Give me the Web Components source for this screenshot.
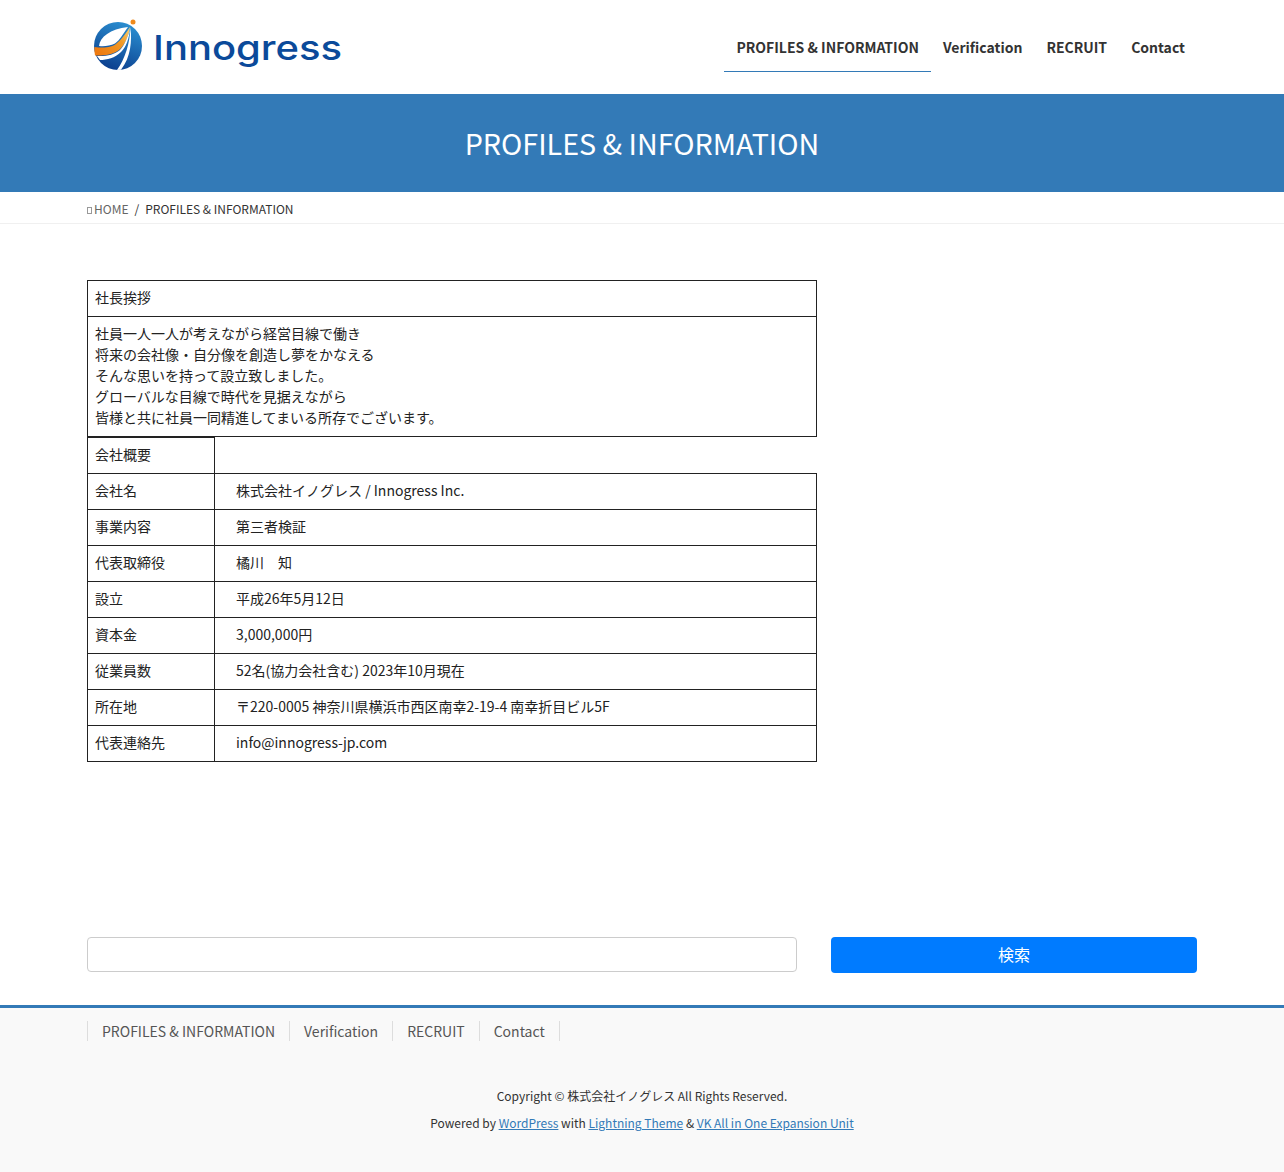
<!DOCTYPE html>
<html lang="ja">
<head>
<meta charset="utf-8">
<title>PROFILES &amp; INFORMATION</title>
<style>
  html, body { margin: 0; padding: 0; background: #fff; }
  body { font-family: "Noto Sans CJK JP", "Noto Sans", sans-serif; font-size: 14px; color: #333; }
  site-shell { min-height: 1172px; }
</style>
</head>
<body>
<site-shell>
  <site-header></site-header>
  <page-title>PROFILES &amp; INFORMATION</page-title>
  <bread-crumb current="PROFILES &amp; INFORMATION"></bread-crumb>
  <profile-tables></profile-tables>
  <search-form></search-form>
  <site-footer></site-footer>
</site-shell>

<script>
class SiteShell extends HTMLElement {
    constructor() {
        super();
        this.attachShadow({ mode: 'open' });
    }
    connectedCallback() {
        this.shadowRoot.innerHTML = `
            <style>
                :host { display: flex; flex-direction: column; }
            </style>
            <slot></slot>
        `;
    }
}

class SiteHeader extends HTMLElement {
    constructor() {
        super();
        this.attachShadow({ mode: 'open' });
    }
    connectedCallback() {
        this.shadowRoot.innerHTML = `
            <style>
                :host { display: block; height: 94px; background: #fff; }
                .wrap {
                    width: 1110px;
                    height: 94px;
                    margin: 0 auto;
                    display: flex;
                    justify-content: space-between;
                    align-items: flex-start;
                }
                .logo { display: flex; align-items: center; height: 94px; padding-left: 6px; }
                .logo svg { display: block; }
                .word {
                    font-family: "Inter", sans-serif;
                    font-weight: 500;
                    font-size: 34.5px;
                    fill: #0b4a9a;
                }
                nav { display: flex; padding: 23px 0 0 0; }
                a {
                    display: block;
                    height: 48px;
                    padding: 0 12px;
                    box-sizing: border-box;
                    font-size: 14px;
                    font-weight: 700;
                    line-height: 49px;
                    color: #333;
                    text-decoration: none;
                }
                a.on { border-bottom: 1px solid #337ab7; height: 49px; }
            </style>
            <div class="wrap">
                <div class="logo">
                    <svg width="250" height="56" viewBox="0 0 250 56">
                        <defs>
                            <linearGradient id="ring" x1="0.7" y1="0" x2="0.3" y2="1">
                                <stop offset="0" stop-color="#2b90d2"/>
                                <stop offset="1" stop-color="#0a3c8c"/>
                            </linearGradient>
                            <linearGradient id="flame" x1="0" y1="0.8" x2="1" y2="0">
                                <stop offset="0" stop-color="#ee7a10"/>
                                <stop offset="0.6" stop-color="#f19a26"/>
                                <stop offset="1" stop-color="#f9d67a"/>
                            </linearGradient>
                        </defs>
                        <circle cx="25" cy="27" r="24" fill="url(#ring)"/>
                        <path d="M6 27 C7 18 17 10 35 8 C30 15 27 21 22 24.5 C17 27 11 27.5 6 27Z" fill="#fff"/>
                        <path d="M1.5 28 C10 29 19 29 24 24 C29 20 33 14 37 8 C36 16 32 26 26 31 C19 36 9 37 2 36.5 C1.5 33 1.3 31 1.5 28Z" fill="url(#flame)"/>
                        <path d="M4 37 C13 37.5 21 36 27 31 C31 27 35 18 37 10 C36 20 33 28 28 33 C22 39 14 41 7 41Z" fill="#fff"/>
                        <path d="M37.5 8 C39 22 38 38 28 50.8 L24 51 C32 40 37 24 37.5 8Z" fill="#fff"/>
                        <circle cx="40" cy="3" r="2.5" fill="#ef8a1c"/>
                        <text class="word" x="60" y="41" textLength="189" lengthAdjust="spacingAndGlyphs">Innogress</text>
                    </svg>
                </div>
                <nav>
                    <a class="on" href="#">PROFILES &amp; INFORMATION</a>
                    <a href="#">Verification</a>
                    <a href="#">RECRUIT</a>
                    <a href="#">Contact</a>
                </nav>
            </div>
        `;
    }
}

class PageTitle extends HTMLElement {
    constructor() {
        super();
        this.attachShadow({ mode: 'open' });
    }
    connectedCallback() {
        this.shadowRoot.innerHTML = `
            <style>
                :host {
                    display: block;
                    height: 98px;
                    background: #337ab7;
                    color: #fff;
                    font-size: 28.7px;
                    line-height: 98px;
                    text-align: center;
                }
            </style>
            <slot></slot>
        `;
    }
}

class BreadCrumb extends HTMLElement {
    constructor() {
        super();
        this.attachShadow({ mode: 'open' });
    }
    connectedCallback() {
        this.shadowRoot.innerHTML = `
            <style>
                :host {
                    display: block;
                    height: 32px;
                    box-sizing: border-box;
                    border-bottom: 1px solid #f0f0f0;
                }
                .wrap {
                    width: 1110px;
                    margin: 0 auto;
                    display: flex;
                    align-items: center;
                    height: 32px;
                    font-size: 12px;
                    color: #333;
                }
                .tofu {
                    width: 3px;
                    height: 5px;
                    border: 1px solid #999;
                    margin: 4px 2px 0 0;
                }
                .home { color: #666; }
                .sep { padding: 0 6px; }
            </style>
            <div class="wrap">
                <span class="tofu"></span>
                <span class="home">HOME</span>
                <span class="sep">/</span>
                <span>${this.getAttribute('current').replace('&', '&amp;')}</span>
            </div>
        `;
    }
}

class ProfileTables extends HTMLElement {
    constructor() {
        super();
        this.attachShadow({ mode: 'open' });
    }
    connectedCallback() {
        const rows = [
            ['会社名', '　株式会社イノグレス / Innogress Inc.'],
            ['事業内容', '　第三者検証'],
            ['代表取締役', '　橘川　知'],
            ['設立', '　平成26年5月12日'],
            ['資本金', '　3,000,000円'],
            ['従業員数', '　52名(協力会社含む) 2023年10月現在'],
            ['所在地', '　〒220-0005 神奈川県横浜市西区南幸2-19-4 南幸折目ビル5F'],
            ['代表連絡先', '　info@innogress-jp.com']
        ];
        this.shadowRoot.innerHTML = `
            <style>
                :host {
                    display: block;
                    width: 1110px;
                    margin: 56px auto 0;
                    height: 657px;
                    color: #222;
                    font-size: 14px;
                    line-height: 21px;
                }
                table { border-collapse: collapse; width: 730px; table-layout: fixed; }
                td { border: 1px solid #222; padding: 6px 7px 8px; height: 21px; vertical-align: top; }
                .first { width: 127px; }
                td.blank { border-top: 0; border-right: 0; }
            </style>
            <table>
                <tr><td>社長挨拶</td></tr>
                <tr><td>社員一人一人が考えながら経営目線で働き<br>将来の会社像・自分像を創造し夢をかなえる<br>そんな思いを持って設立致しました。<br>グローバルな目線で時代を見据えながら<br>皆様と共に社員一同精進してまいる所存でございます。</td></tr>
            </table>
            <table>
                <colgroup><col class="first"><col></colgroup>
                <tr><td>会社概要</td><td class="blank"></td></tr>
                ${rows.map(r => `<tr><td>${r[0]}</td><td>${r[1]}</td></tr>`).join('')}
            </table>
        `;
    }
}

class SearchForm extends HTMLElement {
    constructor() {
        super();
        this.attachShadow({ mode: 'open' });
    }
    connectedCallback() {
        this.shadowRoot.innerHTML = `
            <style>
                :host {
                    display: flex;
                    align-items: flex-start;
                    justify-content: space-between;
                    width: 1110px;
                    margin: 0 auto;
                    height: 68px;
                }
                input {
                    width: 710px;
                    height: 35px;
                    box-sizing: border-box;
                    margin: 0;
                    border: 1px solid #ccc;
                    border-radius: 4px;
                    background: #fff;
                }
                button {
                    width: 366px;
                    height: 36px;
                    margin: 0;
                    border: 0;
                    border-radius: 4px;
                    background: #007bff;
                    color: #fff;
                    font-family: inherit;
                    font-size: 16px;
                    line-height: 24px;
                    padding: 0 0 2px;
                }
            </style>
            <input type="text" aria-label="検索">
            <button type="button">検索</button>
        `;
    }
}

class SiteFooter extends HTMLElement {
    constructor() {
        super();
        this.attachShadow({ mode: 'open' });
    }
    connectedCallback() {
        this.shadowRoot.innerHTML = `
            <style>
                :host {
                    display: block;
                    height: 167px;
                    box-sizing: border-box;
                    border-top: 3px solid #337ab7;
                    background: #f9f9f9;
                    color: #333;
                }
                nav {
                    width: 1110px;
                    margin: 0 auto;
                    padding-top: 13px;
                    display: flex;
                }
                nav a {
                    display: block;
                    padding: 0 14px;
                    height: 20px;
                    line-height: 20px;
                    font-size: 14px;
                    color: #555;
                    text-decoration: none;
                    border-right: 1px solid #ddd;
                }
                nav a:first-child { border-left: 1px solid #ddd; }
                .copy { margin-top: 41px; text-align: center; font-size: 12px; line-height: 27px; }
                .copy a { color: #337ab7; }
            </style>
            <nav>
                <a href="#">PROFILES &amp; INFORMATION</a>
                <a href="#">Verification</a>
                <a href="#">RECRUIT</a>
                <a href="#">Contact</a>
            </nav>
            <div class="copy">
                <div>Copyright © 株式会社イノグレス All Rights Reserved.</div>
                <div>Powered by <a href="#">WordPress</a> with <a href="#">Lightning Theme</a> &amp; <a href="#">VK All in One Expansion Unit</a></div>
            </div>
        `;
    }
}

customElements.define('site-shell', SiteShell);
customElements.define('site-header', SiteHeader);
customElements.define('page-title', PageTitle);
customElements.define('bread-crumb', BreadCrumb);
customElements.define('profile-tables', ProfileTables);
customElements.define('search-form', SearchForm);
customElements.define('site-footer', SiteFooter);
</script>
</body>
</html>
